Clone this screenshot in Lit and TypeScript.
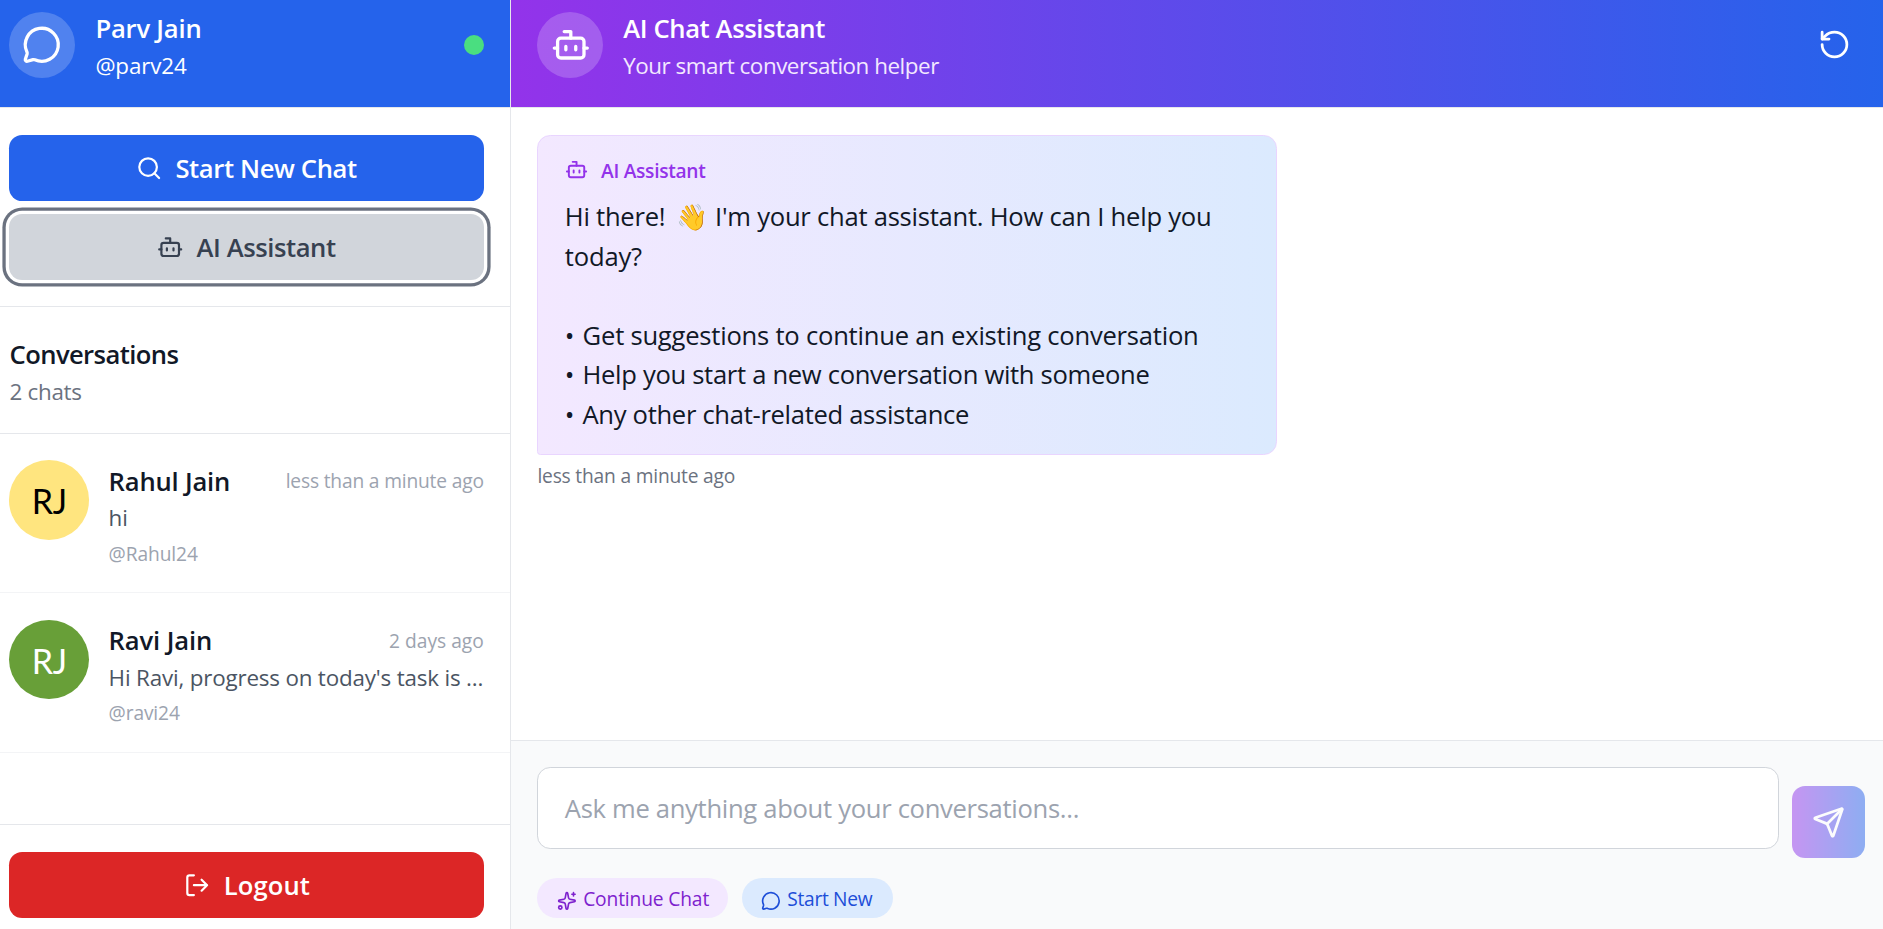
import { LitElement, html, css, svg } from "lit";
import { customElement, property } from "lit/decorators.js";
import { styleMap } from "lit/directives/style-map.js";

const ICONS: Record<string, unknown> = {
  message: svg`<path d="M2.992 16.342a2 2 0 0 1 .094 1.167l-1.065 3.29a1 1 0 0 0 1.236 1.168l3.413-.998a2 2 0 0 1 1.099.092 10 10 0 1 0-4.777-4.719"/>`,
  bot: svg`<path d="M12 8V4H8"/><rect width="16" height="12" x="4" y="8" rx="2"/><path d="M2 14h2M20 14h2M15 13v2M9 13v2"/>`,
  search: svg`<path d="m21 21-4.34-4.34"/><circle cx="11" cy="11" r="8"/>`,
  logout: svg`<path d="m16 17 5-5-5-5M21 12H9M9 21H5a2 2 0 0 1-2-2V5a2 2 0 0 1 2-2h4"/>`,
  reset: svg`<path d="M3 12a9 9 0 1 0 9-9 9.75 9.75 0 0 0-6.74 2.74L3 8"/><path d="M3 3v5h5"/>`,
  send: svg`<path d="M14.536 21.686a.5.5 0 0 0 .937-.024l6.5-19a.496.496 0 0 0-.635-.635l-19 6.5a.5.5 0 0 0-.024.937l7.93 3.18a2 2 0 0 1 1.112 1.11z"/><path d="m21.854 2.147-10.94 10.939"/>`,
  sparkles: svg`<path d="M11.017 2.814a1 1 0 0 1 1.966 0l1.051 5.558a2 2 0 0 0 1.594 1.594l5.558 1.051a1 1 0 0 1 0 1.966l-5.558 1.051a2 2 0 0 0-1.594 1.594l-1.051 5.558a1 1 0 0 1-1.966 0l-1.051-5.558a2 2 0 0 0-1.594-1.594l-5.558-1.051a1 1 0 0 1 0-1.966l5.558-1.051a2 2 0 0 0 1.594-1.594z"/><path d="M20 2v4M22 4h-4"/><circle cx="4" cy="20" r="2"/>`,
};

@customElement("ui-icon")
class UiIcon extends LitElement {
  @property() name = "";
  static styles = css`
    :host { display: block; flex: none; width: 26.4px; height: 26.4px; }
    svg { display: block; width: 100%; height: 100%; overflow: visible; }
  `;
  render() {
    return html`<svg viewBox="0 0 24 24" fill="none" stroke="currentColor" stroke-width="2"
      stroke-linecap="round" stroke-linejoin="round">${ICONS[this.name]}</svg>`;
  }
}

const text = css`
  .base { font-size: 25.6px; line-height: 39.6px; }
  .sm { font-size: 22.4px; line-height: 33px; }
  .xs { font-size: 19.2px; line-height: 26.4px; }
  .semi { font-weight: 600; }
  .nowrap { white-space: nowrap; }
`;

interface Chat {
  name: string; handle: string; time: string; preview: string;
  bg: string; fg: string; spacing: string[];
}

const CHATS: Chat[] = [
  { name: "Rahul Jain", handle: "@Rahul24", time: "less than a minute ago", preview: "hi",
    bg: "#ffe57f", fg: "#000", spacing: ["-0.19px", "-0.17px", "-0.16px", "-0.11px"] },
  { name: "Ravi Jain", handle: "@ravi24", time: "2 days ago", preview: "Hi Ravi, progress on today's task is ...",
    bg: "#689f38", fg: "#fff", spacing: ["-0.12px", "0", "-0.18px", "-0.13px"] },
];

@customElement("chat-item")
class ChatItem extends LitElement {
  @property({ attribute: false }) chat!: Chat;
  static styles = [text, css`
    :host { display: flex; gap: 20px; padding: 26.4px 26.2px 26.4px 8.8px; border-bottom: 1px solid #f3f4f6; }
    .avatar { flex: none; width: 79.8px; height: 79.2px; border-radius: 50%; display: flex; align-items: center;
      justify-content: center; font: 34px/79px Lato, sans-serif; letter-spacing: -.4px; box-sizing: border-box; padding: 1.5px 0 0 1px; }
    .body { flex: 1; min-width: 0; padding-top: 1.4px; margin-bottom: -1.4px; }
    .top { display: flex; justify-content: space-between; align-items: center; }
    .name { color: #111827; }
    .time, .handle { color: #9ca3af; }
    .preview { color: #4b5563; }
    .handle { margin-top: 6.6px; }
  `];
  render() {
    const c = this.chat;
    const ls = (i: number) => styleMap({ letterSpacing: c.spacing[i] });
    return html`
      <div class="avatar" style=${styleMap({ background: c.bg, color: c.fg })}>RJ</div>
      <div class="body">
        <div class="top">
          <span class="name base semi nowrap" style=${ls(0)}>${c.name}</span>
          <span class="time xs nowrap" style=${ls(1)}>${c.time}</span>
        </div>
        <div class="preview sm nowrap" style=${ls(2)}>${c.preview}</div>
        <div class="handle xs" style=${ls(3)}>${c.handle}</div>
      </div>`;
  }
}

@customElement("app-root")
class AppRoot extends LitElement {
  static styles = [text, css`
    :host { display: grid; grid-template-columns: 511px 1fr; height: 100vh; overflow: hidden; background: #fff;
      font-family: "Open Sans", "Noto Sans", sans-serif; color: #111827; }
    * { box-sizing: border-box; }
    button { font-family: inherit; border: 0; padding: 0; margin: 0; background: none; }
    .side, .main { display: flex; flex-direction: column; min-height: 0; min-width: 0; }
    .side { border-right: 1px solid #e5e7eb; }
    header { display: flex; align-items: center; flex: none; height: 108px; padding: 8.6px 26.2px 25.8px 8.8px;
      color: #fff; border-bottom: 1px solid #e5e7eb; background: #2563eb; background-clip: padding-box; gap: 19.8px; }
    .main header { background-image: linear-gradient(to right, #9333ea, #2563eb); padding-left: 26.4px; padding-right: 32.4px; }
    .disc { flex: none; width: 66px; height: 66px; border-radius: 50%; background: rgba(255,255,255,.2);
      display: flex; align-items: center; justify-content: center; }
    .disc ui-icon { width: 39.6px; height: 39.6px; }
    .grow { flex: 1; padding-top: 1.6px; }
    .side .grow { padding-left: .8px; }
    .dot { width: 20px; height: 20px; border-radius: 50%; background: #4ade80; }
    .reset { width: 33px; height: 33px; }
    .actions { padding: 27px 26.2px 26.2px 8.8px; display: flex; flex-direction: column; gap: 13px; border-bottom: 1px solid #e5e7eb; }
    .btn { height: 66px; border-radius: 13.2px; display: flex; align-items: center; justify-content: center; gap: 13.2px; color: #fff; }
    .btn span { padding-top: 2px; }
    .start { background: #2563eb; letter-spacing: -.37px; }
    .ai { background: #d1d5db; color: #374151; letter-spacing: -.43px; box-shadow: 0 0 0 3.3px #fff, 0 0 0 6.6px #6b7280; }
    .heading { padding: 27.8px 9.6px 25.4px; border-bottom: 1px solid #e5e7eb; }
    .t-conv { letter-spacing: -.6px; }
    .count { color: #6b7280; letter-spacing: -.3px; }
    .list { flex: 1; }
    .exit { border-top: 1px solid #e5e7eb; padding: 26.8px 26.2px 11.2px 8.8px; }
    .logout { width: 100%; background: #dc2626; letter-spacing: .1px; padding-left: 1.6px; }
    .t-user { letter-spacing: -.2px; } .t-at { letter-spacing: -.14px; }
    .t-title { letter-spacing: -.38px; } .t-sub { letter-spacing: -.46px; color: #f3e8ff; }
    .feed { flex: 1; padding: 27px 26.4px; }
    .bubble { width: 740px; padding: 19.8px 26.4px; border: 1px solid #e9d5ff;
      border-radius: 13.2px 13.2px 13.2px 3.3px; background: linear-gradient(to right, #f3e8ff, #dbeafe); }
    .who { display: flex; align-items: center; gap: 13.2px; margin-bottom: 13.2px; color: #9333ea; letter-spacing: -.3px; }
    .who span { padding-top: 2px; margin-bottom: -1px; }
    .who ui-icon { width: 23.1px; height: 23.1px; }
    .copy { padding-top: .6px; margin-bottom: -.6px; }
    .line { height: 39.6px; white-space: nowrap; }
    .l1 { letter-spacing: -.25px; } .l2 { letter-spacing: -.18px; } .l3 { letter-spacing: -.23px; }
    .l4 { letter-spacing: -.31px; } .l5 { letter-spacing: -.31px; }
    .mark { margin-right: 2px; }
    .wave { display: inline-block; width: 28px; margin: 0 5px 0 4px; }
    .when { margin-top: 8.2px; color: #6b7280; letter-spacing: -.19px; }
    .composer { flex: none; height: 189px; border-top: 1px solid #e5e7eb; background: #f9fafb; padding: 26.4px 18px 0 26.4px; }
    .entry { display: flex; gap: 13.2px; height: 91px; }
    .input { flex: 1; height: 82px; border: 1px solid #d1d5db; border-radius: 13.2px; background: #fff; color: #9ca3af;
      padding: 21px 26.4px 0; letter-spacing: -.31px; }
    .send { align-self: flex-end; width: 73px; height: 72px; border-radius: 13.2px; opacity: .5; color: #fff;
      background: linear-gradient(to right, #9333ea, #2563eb); display: flex; align-items: center; justify-content: center; }
    .send ui-icon { width: 33px; height: 33px; }
    .chips { display: flex; gap: 13.4px; margin-top: 19.8px; }
    .chip { height: 40px; border-radius: 20px; padding: 0 0 0 19.8px; display: flex; align-items: center; gap: 6.2px; }
    .chip ui-icon { width: 19.8px; height: 19.8px; margin-top: 6px; }
    .chip span { padding-top: 1.6px; }
    .cont { background: #f3e8ff; color: #7e22ce; letter-spacing: -.14px; width: 190.8px; }
    .fresh { background: #dbeafe; color: #1d4ed8; letter-spacing: -.33px; width: 151.4px; }
  `];
  render() {
    return html`
      <aside class="side">
        <header>
          <div class="disc"><ui-icon name="message"></ui-icon></div>
          <div class="grow">
            <div class="base semi t-user">Parv Jain</div>
            <div class="sm t-at">@parv24</div>
          </div>
          <span class="dot"></span>
        </header>
        <div class="actions">
          <button class="btn start base semi"><ui-icon name="search"></ui-icon><span>Start New Chat</span></button>
          <button class="btn ai base semi"><ui-icon name="bot"></ui-icon><span>AI Assistant</span></button>
        </div>
        <div class="heading">
          <div class="base semi t-conv">Conversations</div>
          <div class="sm count">2 chats</div>
        </div>
        <div class="list">${CHATS.map((c) => html`<chat-item .chat=${c}></chat-item>`)}</div>
        <div class="exit">
          <button class="btn logout base semi"><ui-icon name="logout"></ui-icon><span>Logout</span></button>
        </div>
      </aside>
      <main class="main">
        <header>
          <div class="disc"><ui-icon name="bot"></ui-icon></div>
          <div class="grow">
            <div class="base semi t-title">AI Chat Assistant</div>
            <div class="sm t-sub">Your smart conversation helper</div>
          </div>
          <ui-icon class="reset" name="reset"></ui-icon>
        </header>
        <section class="feed">
          <div class="bubble">
            <div class="who xs semi"><ui-icon name="bot"></ui-icon><span>AI Assistant</span></div>
            <div class="base copy">
              <div class="line l1">Hi there! <span class="wave">👋</span> I'm your chat assistant. How can I help you</div>
              <div class="line l2">today?</div>
              <div class="line"></div>
              <div class="line l3"><span class="mark">•</span> Get suggestions to continue an existing conversation</div>
              <div class="line l4"><span class="mark">•</span> Help you start a new conversation with someone</div>
              <div class="line l5"><span class="mark">•</span> Any other chat-related assistance</div>
            </div>
          </div>
          <div class="when xs">less than a minute ago</div>
        </section>
        <section class="composer">
          <div class="entry">
            <div class="input base">Ask me anything about your conversations...</div>
            <button class="send"><ui-icon name="send"></ui-icon></button>
          </div>
          <div class="chips">
            <button class="chip cont xs nowrap"><ui-icon name="sparkles"></ui-icon><span>Continue Chat</span></button>
            <button class="chip fresh xs nowrap"><ui-icon name="message"></ui-icon><span>Start New</span></button>
          </div>
        </section>
      </main>`;
  }
}
